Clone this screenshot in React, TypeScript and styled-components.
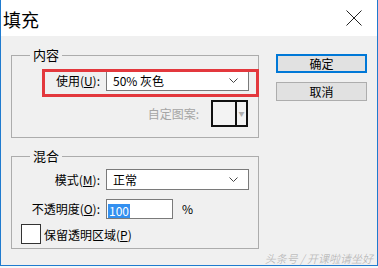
import styled, { createGlobalStyle } from "styled-components";

const GlobalStyle = createGlobalStyle`
  html, body {
    margin: 0;
    padding: 0;
    background: #f7f7f7;
  }
  body {
    font-family: "Noto Sans CJK SC", "Noto Sans", sans-serif;
    font-size: 12px;
    color: #000;
  }
`;

const Window = styled.div`
  position: relative;
  width: 378px;
  height: 266px;
  box-sizing: border-box;
  border: 1px solid #1f7bcf;
  border-top: none;
  background: #f0f0f0;
`;

const TitleBar = styled.div`
  height: 36px;
  background: #fff;
  display: flex;
  align-items: center;
  justify-content: space-between;
  padding: 0 15px 0 2px;
`;

const Title = styled.div`
  font-size: 18px;
  line-height: 20px;
  margin-top: 2px;
`;

const Body = styled.div`
  display: flex;
  gap: 17px;
  padding: 11px 0 0 10px;
`;

const Column = styled.div`
  width: 248px;
  display: flex;
  flex-direction: column;
  gap: 10px;
`;

const Group = styled.fieldset`
  margin: 0;
  padding: 0;
  min-width: 0;
  border: 1px solid #acacac;
`;

const Legend = styled.legend`
  margin-left: 18px;
  padding: 0 3px;
  font-size: 13px;
  line-height: 16px;
`;

const GroupBody = styled.div<{ $top: number; $bottom: number }>`
  display: flex;
  flex-direction: column;
  padding: ${(p) => p.$top}px 0 ${(p) => p.$bottom}px 0;
`;

const Row = styled.div<{ $gap?: number }>`
  display: flex;
  align-items: center;
  margin-top: ${(p) => p.$gap ?? 0}px;
`;

const Label = styled.label`
  width: 88px;
  margin-right: 6px;
  text-align: right;
  white-space: nowrap;
  line-height: 16px;
`;

const Select = styled.div`
  width: 143px;
  height: 21px;
  box-sizing: border-box;
  border: 1px solid #7a7a7a;
  background: #fff;
  display: flex;
  align-items: center;
  justify-content: space-between;
  padding: 0 10px 0 6px;
  line-height: 16px;
`;

const TextInput = styled.div`
  width: 67px;
  height: 20px;
  box-sizing: border-box;
  border: 1px solid #7a7a7a;
  background: #fff;
  padding: 2px 0 0 1px;
`;

const Selected = styled.span`
  display: inline-block;
  background: #3390f0;
  color: #fff;
  line-height: 14px;
  padding: 0 1px;
`;

const Unit = styled.span`
  margin-left: 9px;
  line-height: 16px;
`;

const PatternRow = styled.div`
  display: flex;
  align-items: center;
  justify-content: flex-end;
  gap: 12px;
  padding-right: 10px;
  margin-top: 9px;
`;

const MutedLabel = styled.span`
  color: #a5a5a5;
  line-height: 16px;
`;

const Pattern = styled.div`
  width: 37px;
  height: 27px;
  box-sizing: border-box;
  border: 2px solid #111;
  display: flex;
  background: #f3f3f3;
`;

const Swatch = styled.div`
  flex: 1;
  border-right: 2px solid #111;
`;

const SwatchArrow = styled.div`
  width: 9px;
  display: flex;
  align-items: center;
  justify-content: center;
  color: #b0b0b0;
  font-size: 6px;
`;

const CheckRow = styled.div`
  display: flex;
  align-items: center;
  gap: 3px;
  padding-left: 9px;
  margin-top: 5px;
`;

const Box = styled.div`
  width: 20px;
  height: 20px;
  box-sizing: border-box;
  border: 1.5px solid #333;
  background: #fff;
`;

const Buttons = styled.div`
  display: flex;
  flex-direction: column;
  gap: 9px;
  margin-top: 7px;
`;

const Button = styled.button<{ $primary?: boolean }>`
  width: 91px;
  height: 19px;
  box-sizing: border-box;
  padding: 0;
  font: inherit;
  line-height: 15px;
  color: #000;
  background: #e1e1e1;
  border: ${(p) => (p.$primary ? "2px solid #0078d7" : "1px solid #adadad")};
`;

const Highlight = styled.div`
  position: absolute;
  left: 41px;
  top: 69px;
  width: 217px;
  height: 28px;
  box-sizing: border-box;
  border: 3px solid #e3383d;
`;

const Watermark = styled.div`
  position: absolute;
  right: 4px;
  bottom: 0px;
  font-size: 11px;
  line-height: 14px;
  color: #bdbdbd;
  font-style: italic;
  text-shadow: 0 0 1px #fff;
`;

const Chevron = () => (
  <svg width="9" height="5" viewBox="0 0 9 5">
    <path d="M0.5 0.5 L4.5 4.5 L8.5 0.5" fill="none" stroke="#444" strokeWidth="1" />
  </svg>
);

const CloseIcon = () => (
  <svg width="16" height="16" viewBox="0 0 16 16">
    <path d="M0.5 0.5 L15.5 15.5 M15.5 0.5 L0.5 15.5" stroke="#222" strokeWidth="1" />
  </svg>
);

export default function App() {
  return (
    <>
      <GlobalStyle />
      <Window>
        <TitleBar>
          <Title>填充</Title>
          <CloseIcon />
        </TitleBar>
        <Body>
          <Column>
            <Group>
              <Legend>内容</Legend>
              <GroupBody $top={7} $bottom={10}>
                <Row>
                  <Label>
                    使用(<u>U</u>):
                  </Label>
                  <Select>
                    <span>50% 灰色</span>
                    <Chevron />
                  </Select>
                </Row>
                <PatternRow>
                  <MutedLabel>自定图案:</MutedLabel>
                  <Pattern>
                    <Swatch />
                    <SwatchArrow>▼</SwatchArrow>
                  </Pattern>
                </PatternRow>
              </GroupBody>
            </Group>
            <Group>
              <Legend>混合</Legend>
              <GroupBody $top={5} $bottom={4}>
                <Row>
                  <Label>
                    模式(<u>M</u>):
                  </Label>
                  <Select>
                    <span>正常</span>
                    <Chevron />
                  </Select>
                </Row>
                <Row $gap={9}>
                  <Label>
                    不透明度(<u>O</u>):
                  </Label>
                  <TextInput>
                    <Selected>100</Selected>
                  </TextInput>
                  <Unit>%</Unit>
                </Row>
                <CheckRow>
                  <Box />
                  <span>
                    保留透明区域(<u>P</u>)
                  </span>
                </CheckRow>
              </GroupBody>
            </Group>
          </Column>
          <Buttons>
            <Button $primary>确定</Button>
            <Button>取消</Button>
          </Buttons>
        </Body>
        <Highlight />
        <Watermark>头条号 / 开课啦请坐好</Watermark>
      </Window>
    </>
  );
}
